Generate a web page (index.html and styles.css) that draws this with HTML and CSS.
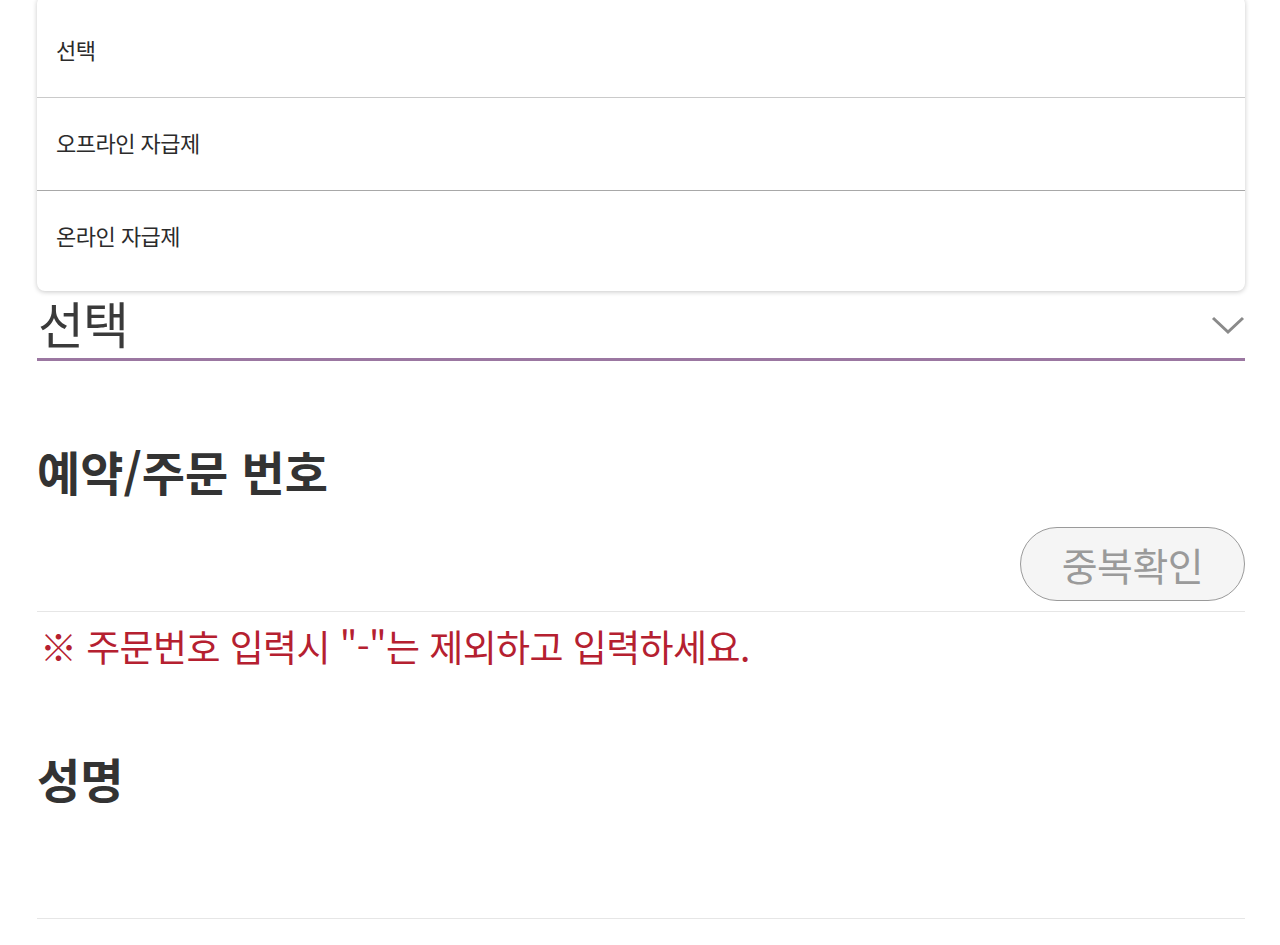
FILE: index.html
```html
<!DOCTYPE html>
<html lang="ko">
<head>
<meta charset="utf-8">
<title>주문 정보</title>
<link rel="stylesheet" href="styles.css">
</head>
<body>
<div class="form">
  <div class="field field-type">
    <div class="select">
      <span class="select-value">선택</span>
      <svg class="chevron" width="34" height="20" viewBox="0 0 34 20" aria-hidden="true"><path d="M2 3 L17 17 L32 3" fill="none" stroke="#8a8a8a" stroke-width="3"/></svg>
    </div>
    <ul class="menu">
      <li class="menu-item">선택</li>
      <li class="menu-item">오프라인 자급제</li>
      <li class="menu-item menu-item-dark">온라인 자급제</li>
    </ul>
  </div>
  <div class="field field-order">
    <h2 class="label">예약/주문 번호</h2>
    <div class="input-row">
      <div class="input-space"></div>
      <button class="btn-check" type="button">중복확인</button>
    </div>
    <p class="note">※ 주문번호 입력시 "-"는 제외하고 입력하세요.</p>
  </div>
  <div class="field field-name">
    <h2 class="label">성명</h2>
    <div class="input-row input-row-plain"></div>
  </div>
</div>
</body>
</html>
```

FILE: styles.css
```css
* { box-sizing: border-box; }
html, body { margin: 0; padding: 0; background: #fff; }
body {
  font-family: "Noto Sans CJK KR", "Noto Sans", sans-serif;
  color: #333;
  overflow: hidden;
}
.form {
  padding: 0 35px 0 37px;
}
.field-type {
  position: relative;
  padding-top: 290px;
}
.select {
  height: 71px;
  display: flex;
  align-items: center;
  justify-content: space-between;
  border-bottom: 3px solid #9b77a1;
  padding: 0 0 4px 1px;
}
.select-value {
  font-size: 50px;
  line-height: 60px;
  color: #3a3a3a;
  letter-spacing: -1px;
}
.chevron { display: block; margin-top: 6px; }
.menu {
  position: absolute;
  top: -4px;
  left: 0;
  right: 0;
  margin: 0;
  padding: 8px 0;
  list-style: none;
  background: #fff;
  border-radius: 8px;
  box-shadow: 0 1px 5px rgba(0,0,0,0.22);
  z-index: 2;
}
.menu-item {
  height: 93px;
  display: flex;
  align-items: center;
  padding: 0 0 4px 19px;
  font-size: 22px;
  color: #2b2b2b;
  letter-spacing: -0.5px;
}
.menu-item + .menu-item { border-top: 1px solid #cacaca; }
.menu-item-dark { border-top-color: #a8a8a8 !important; }
.label {
  margin: 0;
  font-size: 47px;
  line-height: 60px;
  font-weight: 700;
  color: #333;
}
.field-order { margin-top: 80px; }
.field-order .input-row { padding-top: 26px; }
.input-row {
  display: flex;
  justify-content: space-between;
  align-items: center;
  padding: 23px 0 10px;
  border-bottom: 1px solid #e6e6e6;
}
.input-space { flex: 1; }
.btn-check {
  width: 225px;
  height: 74px;
  border: 1.5px solid #9a9a9a;
  border-radius: 37px;
  background: #f5f5f5;
  color: #9a9a9a;
  font-family: inherit;
  font-size: 39px;
  letter-spacing: -0.5px;
  padding: 0;
}
.note {
  margin: 12px 0 0 3px;
  font-size: 37px;
  line-height: 44px;
  color: #b52030;
  letter-spacing: -0.6px;
}
.field-name { margin-top: 80px; }
.input-row-plain {
  height: 111px;
  padding: 0;
}
```
